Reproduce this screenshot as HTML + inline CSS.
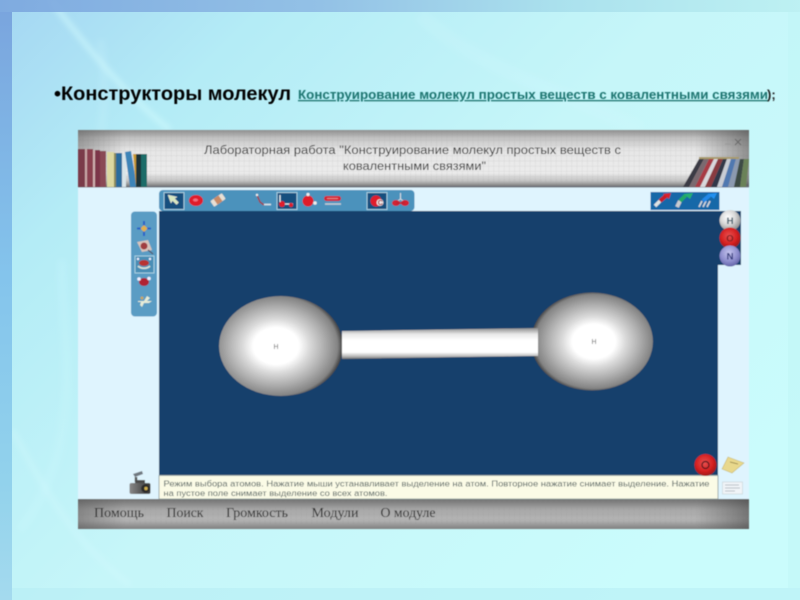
<!DOCTYPE html>
<html lang="ru"><head><meta charset="utf-8"><title>Конструкторы молекул</title>
<style>
html,body{margin:0;padding:0;width:800px;height:600px;overflow:hidden;background:#c8fbfb}
svg{display:block;position:absolute;left:0;top:0}
text{font-family:"Liberation Sans",sans-serif}
.s{font-family:"Liberation Serif",serif}
</style></head><body>
<svg width="800" height="600" viewBox="0 0 800 600" xmlns="http://www.w3.org/2000/svg">
<defs>
<linearGradient id="bg" x1="0" y1="0" x2="1" y2="0.75">
<stop offset="0" stop-color="#a4d6f2"/><stop offset=".22" stop-color="#b4ecf6"/><stop offset=".55" stop-color="#c6f6f9"/><stop offset="1" stop-color="#cafcfc"/></linearGradient>
<linearGradient id="topb" x1="0" y1="0" x2="1" y2="0"><stop offset="0" stop-color="#7ba6de"/><stop offset=".4" stop-color="#8fbce4"/><stop offset=".7" stop-color="#a8dfec"/><stop offset="1" stop-color="#bcf0f2"/></linearGradient>
<linearGradient id="leftb" x1="0" y1="0" x2="0" y2="1"><stop offset="0" stop-color="#7aa5de"/><stop offset=".45" stop-color="#84c4ec"/><stop offset=".8" stop-color="#92d2ec"/><stop offset="1" stop-color="#a4daee"/></linearGradient>
<pattern id="grid" width="5.2" height="5.2" patternUnits="userSpaceOnUse"><path d="M5.2 0V5.2M0 5.2H5.2" stroke="#8c8c8c" stroke-opacity=".28" stroke-width=".6" fill="none"/></pattern>
<linearGradient id="hd" x1="0" y1="0" x2="0" y2="1"><stop offset="0" stop-color="#8e8e8e"/><stop offset=".14" stop-color="#c2c2c2"/><stop offset=".35" stop-color="#e6e6e6"/><stop offset=".75" stop-color="#ececec"/><stop offset=".9" stop-color="#c0c0c0"/><stop offset="1" stop-color="#6e6e6e"/></linearGradient>
<linearGradient id="sideL" x1="0" y1="0" x2="1" y2="0"><stop offset="0" stop-color="#555" stop-opacity=".45"/><stop offset=".07" stop-color="#555" stop-opacity="0"/><stop offset=".92" stop-color="#555" stop-opacity="0"/><stop offset="1" stop-color="#444" stop-opacity=".55"/></linearGradient>
<linearGradient id="ft" x1="0" y1="0" x2="0" y2="1"><stop offset="0" stop-color="#707070"/><stop offset=".35" stop-color="#a8a8a8"/><stop offset=".7" stop-color="#b4b4b4"/><stop offset="1" stop-color="#808080"/></linearGradient>
<radialGradient id="sphL" cx=".46" cy=".5" r=".54"><stop offset="0" stop-color="#fff"/><stop offset=".34" stop-color="#fff"/><stop offset=".5" stop-color="#dadada"/><stop offset=".74" stop-color="#aaa"/><stop offset=".92" stop-color="#848484"/><stop offset="1" stop-color="#3c3c3c"/></radialGradient>
<radialGradient id="sphR" cx=".515" cy=".5" r=".52"><stop offset="0" stop-color="#fff"/><stop offset=".34" stop-color="#fff"/><stop offset=".5" stop-color="#dadada"/><stop offset=".74" stop-color="#aaa"/><stop offset=".92" stop-color="#848484"/><stop offset="1" stop-color="#3c3c3c"/></radialGradient>
<linearGradient id="bond" x1="0" y1="0" x2="0" y2="1"><stop offset="0" stop-color="#8e8e8e"/><stop offset=".2" stop-color="#e8e8e8"/><stop offset=".4" stop-color="#fff"/><stop offset=".78" stop-color="#fff"/><stop offset=".92" stop-color="#b4b4b4"/><stop offset="1" stop-color="#707070"/></linearGradient>
<radialGradient id="wh" cx=".4" cy=".35" r=".7"><stop offset="0" stop-color="#fff"/><stop offset=".5" stop-color="#d8d8d8"/><stop offset="1" stop-color="#888"/></radialGradient>
<radialGradient id="rd" cx=".45" cy=".4" r=".65"><stop offset="0" stop-color="#e85050"/><stop offset=".6" stop-color="#d42020"/><stop offset="1" stop-color="#901818"/></radialGradient>
<radialGradient id="bl" cx=".45" cy=".35" r=".7"><stop offset="0" stop-color="#c4c4ee"/><stop offset=".6" stop-color="#8c8ccc"/><stop offset="1" stop-color="#5a5aa0"/></radialGradient>
<linearGradient id="cam" x1="0" y1="0" x2="1" y2="0"><stop offset="0" stop-color="#8a8a8a"/><stop offset=".5" stop-color="#5c5c5c"/><stop offset="1" stop-color="#3c3c3c"/></linearGradient>
<filter id="b1" x="-5%" y="-5%" width="110%" height="110%"><feGaussianBlur stdDeviation=".55"/></filter>
<filter id="b3" x="-20%" y="-20%" width="140%" height="140%"><feGaussianBlur stdDeviation="3"/></filter>
<clipPath id="rb"><rect x="680" y="158" width="69" height="29"/></clipPath>
</defs>

<!-- background -->
<rect width="800" height="600" fill="url(#bg)"/>
<g fill="none" stroke="#d4fbfd" filter="url(#b3)">
<path d="M50 0C90 50 120 90 170 130" stroke-width="5" stroke-opacity=".6"/>
<path d="M100 40C110 90 100 150 90 200" stroke-width="8" stroke-opacity=".15"/>
<path d="M12 430C40 480 70 540 130 585" stroke-width="5" stroke-opacity=".4"/>
<path d="M20 530C90 440 60 330 62 260" stroke-width="8" stroke-opacity=".2"/>
<path d="M420 15C480 70 560 90 640 130" stroke-width="14" stroke-opacity=".15"/>
</g>
<rect x="0" y="0" width="800" height="12" fill="url(#topb)" opacity=".9"/>
<rect x="0" y="12" width="12" height="588" fill="url(#leftb)"/>
<rect x="12" y="588" width="788" height="12" fill="#b4ecf4" opacity=".5"/>
<rect x="788" y="12" width="12" height="576" fill="#bff4f6" opacity=".4"/>

<g filter="url(#b1)">
<!-- title -->
<text x="54" y="100" font-size="19" font-weight="700" fill="#000" textLength="237" lengthAdjust="spacingAndGlyphs">•Конструкторы молекул</text>
<text x="298" y="99" font-size="13" font-weight="700" fill="#1b7470" textLength="470" lengthAdjust="spacingAndGlyphs" text-decoration="underline">Конструирование молекул простых веществ с ковалентными связями</text>
<text x="767" y="99" font-size="13" font-weight="700" fill="#222">);</text>

<!-- window -->
<rect x="78" y="187" width="671" height="313" fill="#dff4fe"/>
<rect x="78" y="130" width="671" height="57" fill="url(#hd)"/>
<rect x="78" y="130" width="671" height="57" fill="url(#grid)"/>
<rect x="78" y="130" width="671" height="57" fill="url(#sideL)"/>
<rect x="78" y="186" width="671" height="1.500" fill="#6a7078"/>

<!-- books left -->
<g>
<rect x="78" y="149" width="7" height="38" fill="#7a3a48"/><rect x="85" y="149" width="2" height="38" fill="#c9a8a8"/>
<rect x="87" y="149" width="6" height="38" fill="#8a3f50"/><rect x="93" y="150" width="2" height="37" fill="#d0b0b0"/>
<rect x="95" y="150" width="5" height="37" fill="#7c3648"/><rect x="100" y="151" width="6" height="36" fill="#8a4a55"/>
<rect x="107" y="152" width="7" height="35" fill="#dcd8a0"/><rect x="114" y="153" width="3" height="34" fill="#8a8a58"/>
<rect x="116" y="153" width="6" height="34" fill="#2a6c9c"/><rect x="122" y="154" width="4" height="33" fill="#d8e4e8"/>
<polygon points="125,152 131,151 137,187 130,187" fill="#3c84b8"/>
<polygon points="133,154 137,154 140,187 136,187" fill="#c89a30"/>
<rect x="136" y="154" width="5" height="33" fill="#1c3038"/><rect x="141" y="154" width="6" height="33" fill="#1e6c68"/>
</g>
<!-- books right -->
<rect x="699" y="157" width="40" height="2.500" fill="#a89a6a"/>
<g clip-path="url(#rb)">
<polygon points="699,159 704,159 689,187 683,187" fill="#3a3a44"/>
<polygon points="704,159 709,159 695,187 689,187" fill="#7a6a70"/>
<polygon points="709,159 714,159 700,187 695,187" fill="#a83a44"/>
<polygon points="714,159 718,159 705,187 700,187" fill="#d8d8dc"/>
<polygon points="718,159 723,159 711,187 705,187" fill="#8a3a40"/>
<polygon points="723,159 727,159 717,187 711,187" fill="#30384a"/>
<polygon points="727,159 731,159 722,187 717,187" fill="#c8ccd4"/>
<polygon points="731,159 736,159 728,187 722,187" fill="#5078b0"/>
<polygon points="736,159 740,159 734,187 728,187" fill="#8c9ab0"/>
<polygon points="740,159 744,159 740,187 734,187" fill="#3c4c44"/>
<polygon points="744,159 749,159 746,187 740,187" fill="#6a8258"/>
</g>
<!-- window controls -->
<path d="M725 144h6" stroke="#999" stroke-width="1"/>
<path d="M735 139l6 6M741 139l-6 6" stroke="#666" stroke-width=".9"/>

<text x="204" y="154" font-size="11.500" fill="#2e2e2e" textLength="417" lengthAdjust="spacingAndGlyphs">Лабораторная работа "Конструирование молекул простых веществ с</text>
<text x="343" y="170" font-size="11.500" fill="#2e2e2e" textLength="143" lengthAdjust="spacingAndGlyphs">ковалентными связями"</text>

<!-- footer -->
<rect x="78" y="499" width="671" height="30" fill="url(#ft)"/>
<rect x="78" y="499" width="671" height="30" fill="url(#grid)"/>
<rect x="78" y="499" width="671" height="30" fill="url(#sideL)"/>
<g font-size="13.500" fill="#262626">
<text class="s" x="94" y="517" textLength="50" lengthAdjust="spacingAndGlyphs">Помощь</text>
<text class="s" x="166.500" y="517" textLength="37" lengthAdjust="spacingAndGlyphs">Поиск</text>
<text class="s" x="226" y="517" textLength="62" lengthAdjust="spacingAndGlyphs">Громкость</text>
<text class="s" x="311.500" y="517" textLength="47" lengthAdjust="spacingAndGlyphs">Модули</text>
<text class="s" x="380.500" y="517" textLength="55" lengthAdjust="spacingAndGlyphs">О модуле</text>
</g>

<!-- canvas -->
<rect x="159" y="211" width="559" height="264" fill="#14406c"/>
<rect x="159" y="475.500" width="559" height="23.500" fill="#fbfbe6" stroke="#8a9a9a" stroke-width=".8"/>
<rect x="718" y="211" width="23" height="54" fill="#14406c"/>
<text x="163.500" y="486.500" font-size="8.600" fill="#4a5a5a" textLength="546" lengthAdjust="spacingAndGlyphs">Режим выбора атомов. Нажатие мыши устанавливает выделение на атом. Повторное нажатие снимает выделение. Нажатие</text>
<text x="163.500" y="496" font-size="8.600" fill="#4a5a5a" textLength="224" lengthAdjust="spacingAndGlyphs">на пустое поле снимает выделение со всех атомов.</text>

<!-- top toolbar -->
<rect x="159" y="190" width="255.500" height="21" rx="4" fill="#4c92bc"/>
<rect x="164" y="192.500" width="20" height="17" fill="#14507e" stroke="#a4cce0" stroke-width="1"/>
<path d="M168 195l3 8 1.500-2.500 4 4 2-2-4-4 2.500-1.500z" fill="#d8e8c0" stroke="#f4f4e8" stroke-width=".4"/>
<ellipse cx="196" cy="200.500" rx="7" ry="5.500" fill="#e01c2c"/><ellipse cx="195.500" cy="200" rx="2.500" ry="1.500" fill="#f07080"/>
<g transform="rotate(-35 218 200)"><rect x="211" y="196.500" width="14" height="7" rx="1" fill="#e8e0d4"/><rect x="215" y="196.500" width="6" height="7" fill="#c88a66"/></g>
<path d="M257 195l3 7 4 3" stroke="#a04048" stroke-width="1.500" fill="none"/><path d="M264 204.500h7" stroke="#e4e8ec" stroke-width="1.500"/><circle cx="257" cy="195" r="1.200" fill="#eee"/>
<rect x="277" y="192.500" width="20" height="17" fill="#14507e" stroke="#a4cce0" stroke-width="1"/>
<circle cx="282" cy="204" r="3" fill="#e01c2c"/><path d="M280 195v7" stroke="#e8eef0" stroke-width="1.300"/><path d="M285 204h8" stroke="#e8eef0" stroke-width="1.300"/><circle cx="291" cy="205" r="2" fill="#e01c2c"/>
<circle cx="308" cy="201" r="5.500" fill="#e01c2c"/><circle cx="308" cy="194.500" r="1.600" fill="#eee"/><circle cx="315" cy="203" r="1.800" fill="#eee"/>
<rect x="324" y="196" width="17" height="5" rx="2.500" fill="#d42030"/><path d="M327 198.500h11" stroke="#e8a0a0" stroke-width=".8"/><path d="M325 204h16" stroke="#c4ccd4" stroke-width="1.600"/>
<rect x="367" y="192.500" width="20" height="17" fill="#14507e" stroke="#a4cce0" stroke-width="1"/>
<circle cx="376" cy="201" r="5.500" fill="#e01c2c"/><circle cx="380" cy="202.500" r="3.400" fill="#f0e8e8"/><text x="377.800" y="205" font-size="7" font-weight="700" fill="#a01820">C</text>
<path d="M400.500 193v6M395 203l5.500-4 5.500 4" stroke="#d8e0e4" stroke-width="1" fill="none"/><ellipse cx="396" cy="203" rx="4" ry="3" fill="#d42030"/><ellipse cx="405" cy="203" rx="4" ry="3" fill="#d42030"/><rect x="396" y="202" width="9" height="2" fill="#c02030"/>

<!-- right-top tool -->
<rect x="650.500" y="192" width="69" height="18" fill="#1868a8"/>
<path d="M655 206l5-5" stroke="#e0e4e4" stroke-width="3.500"/><path d="M660 201l7-6" stroke="#c81c28" stroke-width="4"/><polygon points="663,194 671,193 669,199" fill="#d8202c"/>
<path d="M677 207l3-6" stroke="#c8ccd0" stroke-width="4"/><path d="M680 201l6-6" stroke="#20a868" stroke-width="4"/><polygon points="684,194 693,193 690,199" fill="#28b070"/>
<path d="M699 207l3-6M703 207l3-6M707 207l3-6" stroke="#d4d8dc" stroke-width="1.600"/><path d="M703 201l7-6" stroke="#2088e8" stroke-width="4"/><polygon points="708,194 717,193 714,199" fill="#2090f0"/>

<!-- left toolbar -->
<rect x="131" y="211.500" width="26" height="105" rx="4" fill="#5a9cc4"/>
<path d="M144 221v15M137 228.500h14" stroke="#2860c8" stroke-width="2"/><rect x="141.500" y="226" width="5" height="5" fill="#e0b050" transform="rotate(45 144 228.500)"/>
<polygon points="137,242 148,240 152,250 142,252" fill="#d8c4bc"/><circle cx="144" cy="246" r="3.500" fill="#a03c40"/><path d="M148 250l5 4" stroke="#556" stroke-width="1.200"/>
<rect x="135" y="256" width="19" height="17" fill="#4a8eb6" stroke="#a8d0e2" stroke-width="1"/>
<ellipse cx="144" cy="263" rx="5" ry="3" fill="#b83030"/><path d="M138 266c3 3 9 3 12 0" stroke="#d8e0d8" stroke-width="1.800" fill="none"/><circle cx="138" cy="259" r="1.200" fill="#eef"/><circle cx="150" cy="259" r="1.200" fill="#eef"/>
<ellipse cx="144" cy="282" rx="5" ry="4" fill="#b02030"/><circle cx="139" cy="279" r="1.800" fill="#eef"/><circle cx="149" cy="278.500" r="1.800" fill="#eef"/>
<path d="M138 301l6 0 3-5 3 2-3 3 5 0-3 2 -5 0-2 4-2-2 1-3-3 0z" fill="#e6ecd8"/><circle cx="142" cy="298" r="1.500" fill="#c8a860"/>

<!-- atoms -->
<circle cx="730" cy="220.500" r="10.500" fill="url(#wh)"/><text x="730" y="224" font-size="9.500" font-weight="700" fill="#3c5868" text-anchor="middle">H</text>
<circle cx="730" cy="238" r="10.500" fill="url(#rd)"/><text x="730" y="241.500" font-size="9.500" font-weight="700" fill="#802024" text-anchor="middle">O</text>
<circle cx="730" cy="256" r="10.500" fill="url(#bl)"/><text x="730" y="259.500" font-size="9.500" font-weight="700" fill="#30387a" text-anchor="middle">N</text>

<circle cx="705.500" cy="465" r="11" fill="url(#rd)"/><circle cx="705.500" cy="465" r="3.500" fill="none" stroke="#50181c" stroke-width="1.200"/>
<polygon points="728,457 744,463 732,473 722,469" fill="#e8d88c" stroke="#c8b870" stroke-width=".6"/>
<path d="M730 462l8 2" stroke="#8a7a40" stroke-width=".7"/>
<rect x="722.500" y="482" width="20" height="12" fill="#f0f4f8" stroke="#c8d0d4" stroke-width=".6"/>
<path d="M725 485h14M725 488h15M725 491h10" stroke="#a8b0b8" stroke-width=".7"/>

<!-- camera -->
<path d="M133 474l9-3 1 3-8 3z" fill="#707880"/>
<path d="M136 477v5" stroke="#555" stroke-width="2.500"/>
<rect x="135" y="480" width="10" height="4" fill="#4c4c4c"/>
<rect x="129.500" y="483" width="21" height="11" rx="2" fill="url(#cam)"/>
<circle cx="145.500" cy="488.500" r="4.300" fill="#2a2a2a"/><circle cx="146" cy="488.500" r="1.700" fill="#d0b050"/>

<!-- molecule -->
<ellipse cx="281" cy="346" rx="62" ry="50" fill="url(#sphL)"/>
<ellipse cx="592" cy="341.500" rx="61" ry="49" fill="url(#sphR)"/>
<polygon points="342,331 538,328 538,356 342,359" fill="url(#bond)"/>
<text x="276" y="349" font-size="7" fill="#666" text-anchor="middle">H</text>
<text x="594" y="344" font-size="7" fill="#666" text-anchor="middle">H</text>
</g>
</svg>
</body></html>
